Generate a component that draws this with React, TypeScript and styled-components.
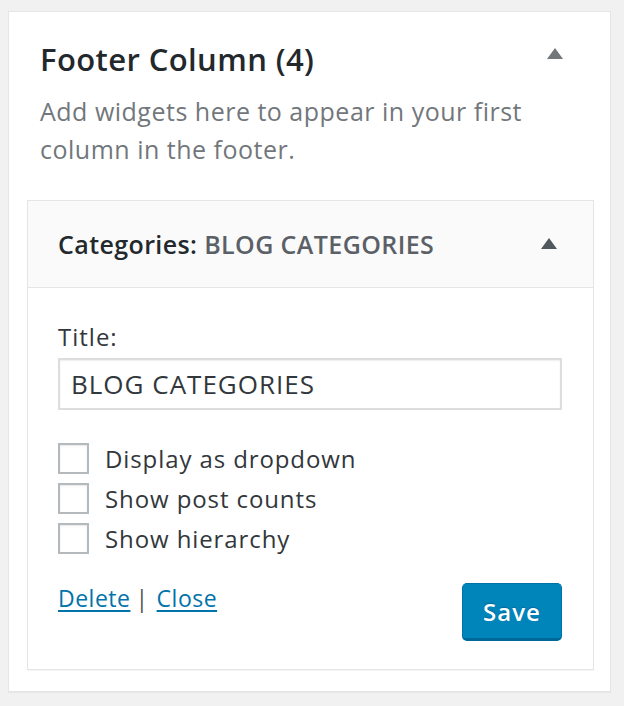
import React from "react";
import styled, { createGlobalStyle } from "styled-components";

const GlobalStyle = createGlobalStyle`
  html, body {
    margin: 0;
    padding: 0;
    background: #f1f1f1;
  }
  body {
    font-family: "Open Sans", "Noto Sans", sans-serif;
    color: #23282d;
  }
`;

const Page = styled.div`
  padding: 11px 13px 13px 8px;
`;

const SidebarCard = styled.div`
  background: #fff;
  border: 1px solid #e5e5e5;
  box-shadow: 0 1px 1px rgba(0, 0, 0, 0.04);
  padding: 0 16px 21px 18px;
`;

const SidebarHeader = styled.div`
  display: flex;
  align-items: center;
  justify-content: space-between;
  padding: 27px 31px 0 13px;
`;

const SidebarTitle = styled.h2`
  margin: 0;
  font-size: 31px;
  line-height: 40px;
  font-weight: 600;
  letter-spacing: 0.4px;
  color: #23282d;
`;

const Arrow = styled.span<{ $color: string; $lift?: number }>`
  width: 0;
  height: 0;
  border-left: 8px solid transparent;
  border-right: 8px solid transparent;
  border-bottom: 11px solid ${(p) => p.$color};
  margin-bottom: ${(p) => p.$lift ?? 0}px;
`;

const Description = styled.p`
  margin: 13px 13px 32px;
  font-size: 25px;
  line-height: 38px;
  letter-spacing: 0.5px;
  color: #72777c;
`;

const Widget = styled.div`
  border: 1px solid #e5e5e5;
  box-shadow: 0 1px 1px rgba(0, 0, 0, 0.04);
`;

const WidgetHeader = styled.div`
  display: flex;
  align-items: center;
  justify-content: space-between;
  height: 86px;
  padding: 0 36px 0 30px;
  background: #fafafa;
  border-bottom: 1px solid #e5e5e5;
`;

const WidgetTitle = styled.h3`
  margin: 0;
  font-size: 25px;
  line-height: 32px;
  font-weight: 600;
  letter-spacing: 0.4px;
  color: #23282d;
`;

const InWidgetTitle = styled.span`
  color: #5b6067;
`;

const WidgetBody = styled.div`
  padding: 34px 31px 28px 30px;
`;

const FieldLabel = styled.label`
  display: block;
  font-size: 24px;
  line-height: 30px;
  letter-spacing: 1px;
  color: #32373c;
`;

const TextInput = styled.input`
  display: block;
  box-sizing: border-box;
  width: 100%;
  height: 52px;
  margin-top: 6px;
  padding: 0 11px;
  border: 2px solid #ddd;
  box-shadow: inset 0 1px 2px rgba(0, 0, 0, 0.07);
  font-family: "Open Sans", "Noto Sans", sans-serif;
  font-size: 26px;
  letter-spacing: 1px;
  color: #32373c;
  outline: none;
`;

const OptionList = styled.div`
  display: flex;
  flex-direction: column;
  gap: 9px;
  margin-top: 33px;
`;

const OptionRow = styled.label`
  display: flex;
  align-items: center;
  gap: 16px;
  font-size: 24px;
  line-height: 31px;
  letter-spacing: 0.9px;
  color: #32373c;
`;

const Checkbox = styled.span`
  box-sizing: border-box;
  width: 31px;
  height: 31px;
  border: 2px solid #b4b9be;
  box-shadow: inset 0 1px 2px rgba(0, 0, 0, 0.1);
  background: #fff;
`;

const ActionsRow = styled.div`
  display: flex;
  justify-content: space-between;
  align-items: flex-start;
  margin-top: 29px;
`;

const LinkGroup = styled.div`
  font-size: 23px;
  line-height: 30px;
  letter-spacing: 0.5px;
  color: #555;
`;

const ActionLink = styled.a`
  color: #0073aa;
  text-decoration: underline;
  text-underline-offset: 3px;
`;

const Separator = styled.span`
  margin: 0 8px 0 5px;
`;

const SaveButton = styled.button`
  width: 100px;
  height: 58px;
  border: 1px solid #0073aa;
  border-bottom-width: 3px;
  border-bottom-color: #006799;
  border-radius: 5px;
  background: #0085ba;
  color: #fff;
  font-family: "Open Sans", "Noto Sans", sans-serif;
  font-size: 24px;
  font-weight: 600;
  letter-spacing: 1px;
  text-shadow: 0 -1px 1px #006799;
  padding: 0;
`;

const options = ["Display as dropdown", "Show post counts", "Show hierarchy"];

export default function App() {
  return (
    <>
      <GlobalStyle />
      <Page>
        <SidebarCard>
          <SidebarHeader>
            <SidebarTitle>Footer Column (4)</SidebarTitle>
            <Arrow $color="#72777c" $lift={12} />
          </SidebarHeader>
          <Description>
            Add widgets here to appear in your first column in the footer.
          </Description>
          <Widget>
            <WidgetHeader>
              <WidgetTitle>
                Categories: <InWidgetTitle>BLOG CATEGORIES</InWidgetTitle>
              </WidgetTitle>
              <Arrow $color="#50575e" $lift={2} />
            </WidgetHeader>
            <WidgetBody>
              <FieldLabel>Title:</FieldLabel>
              <TextInput defaultValue="BLOG CATEGORIES" />
              <OptionList>
                {options.map((o) => (
                  <OptionRow key={o}>
                    <Checkbox />
                    {o}
                  </OptionRow>
                ))}
              </OptionList>
              <ActionsRow>
                <LinkGroup>
                  <ActionLink href="#">Delete</ActionLink>
                  <Separator>|</Separator>
                  <ActionLink href="#">Close</ActionLink>
                </LinkGroup>
                <SaveButton>Save</SaveButton>
              </ActionsRow>
            </WidgetBody>
          </Widget>
        </SidebarCard>
      </Page>
    </>
  );
}
